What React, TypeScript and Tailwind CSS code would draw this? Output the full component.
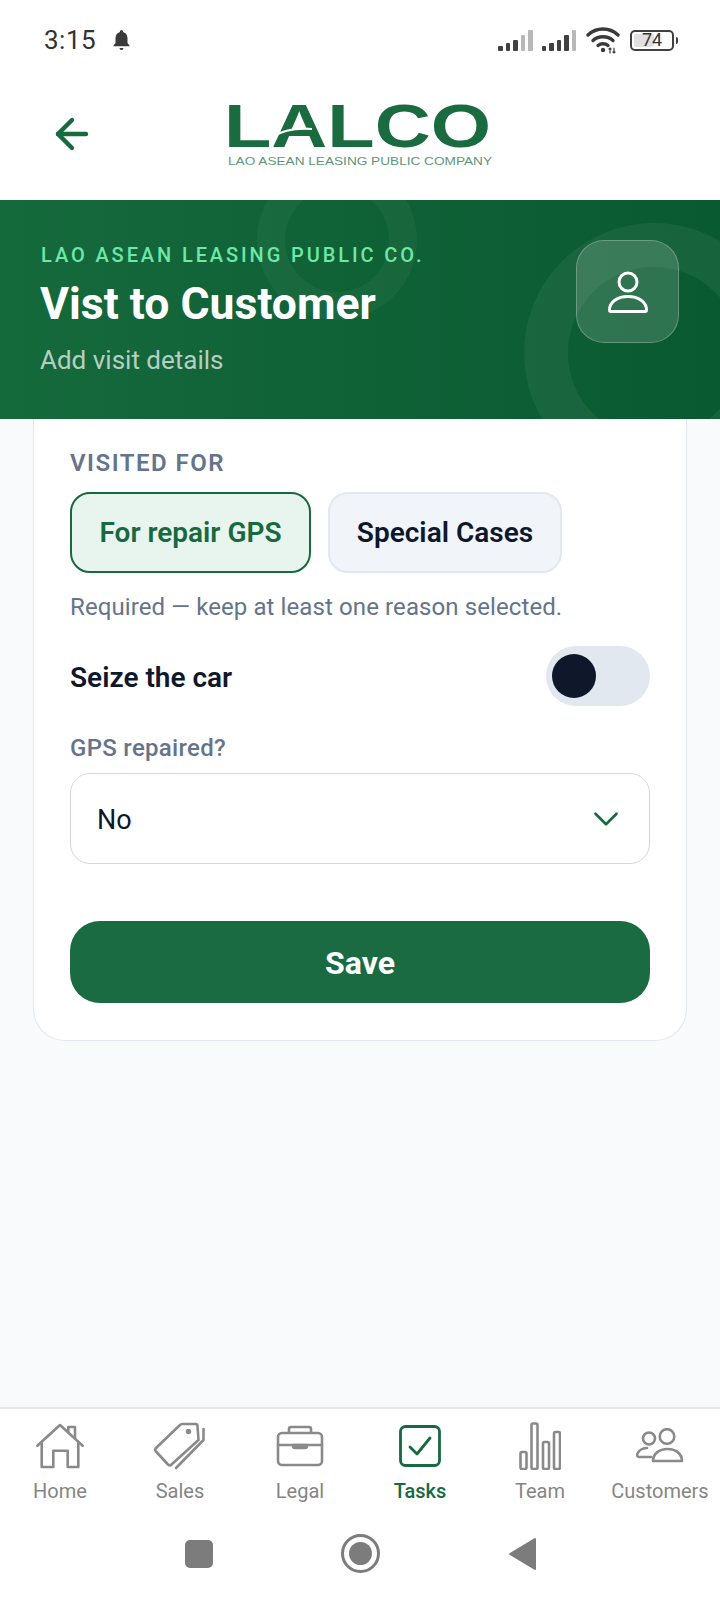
import { ArrowLeft, ChevronDown } from "lucide-react";

const GRAY = "#8a8a8a";

function Signal({ dim }: { dim: number }) {
  const bars = [5, 8, 11, 16, 21];
  return (
    <div className="flex items-end gap-[3px]">
      {bars.map((h, i) => (
        <div
          key={i}
          className={i >= 5 - dim ? "w-[4.500px] rounded-[1px] bg-[#b8b8b8]" : "w-[4.500px] rounded-[1px] bg-[#404040]"}
          style={{ height: h }}
        />
      ))}
    </div>
  );
}

function StatusBar() {
  return (
    <div className="flex h-[78px] items-center justify-between pl-[44px] pr-[42px] pt-[2px]">
      <div className="flex items-center gap-[15px]">
        <span className="text-[26px] leading-none tracking-[0.5px] text-[#333333]">3:15</span>
        <svg width="21" height="22" viewBox="0 0 20 22" fill="#3a3a3a">
          <path d="M10 1a1.600 1.600 0 0 1 1.600 1.600v.5c3 .8 4.400 3.300 4.400 6.400v4.500l2 2.500v.8H2v-.8l2-2.500V9.500c0-3.100 1.400-5.600 4.400-6.400v-.5A1.600 1.600 0 0 1 10 1zM8 19h4a2 2 0 0 1-4 0z" />
        </svg>
      </div>
      <div className="flex items-center">
        <Signal dim={2} />
        <div className="ml-[9px]">
          <Signal dim={1} />
        </div>
        <svg width="34" height="28" viewBox="0 0 34 28" fill="none" stroke="#3a3a3a" strokeWidth="3.400" strokeLinecap="round" className="ml-[10px]">
          <path d="M2 9c8.500-8 21.500-8 30 0" />
          <path d="M7 14.500c5.600-5 14.400-5 20 0" />
          <path d="M12 19.500c2.800-2.400 7.200-2.400 10 0" />
          <circle cx="17" cy="24" r="2.200" fill="#3a3a3a" stroke="none" />
          <path d="M24 27v-5M23 23l1-1 1 1M28 22v5M27 26l1 1 1-1" strokeWidth="1.200" />
        </svg>
        <div className="ml-[10px] flex items-center gap-[2px]">
          <div className="relative flex h-[21px] w-[44px] items-center justify-center rounded-[5px] border-2 border-[#404040] text-[18px] leading-none text-[#333333]">
            <div className="absolute inset-y-[2px] left-[2px] w-[20px] rounded-[2px] bg-[#e0e0e0]" />
            <span className="relative">74</span>
          </div>
          <div className="h-[7px] w-[2px] rounded-r-[2px] bg-[#404040]" />
        </div>
      </div>
    </div>
  );
}

function Logo() {
  return (
    <svg width="270" height="88" viewBox="-4 -4 270 88" className="ml-[128px] shrink-0">
      <text x="-4" y="53" fill="#1a6b40" fontFamily="Liberation Sans" fontWeight="700" fontSize="62" textLength="267" lengthAdjust="spacingAndGlyphs">
        LALCO
      </text>
      <path d="M44 43Q60 33 84 35" fill="none" stroke="white" strokeWidth="2.200" />
      <text x="0" y="71" fill="#5f9679" fontFamily="Liberation Sans" fontSize="10.500" textLength="264" lengthAdjust="spacingAndGlyphs">
        LAO ASEAN LEASING PUBLIC COMPANY
      </text>
    </svg>
  );
}

function Banner() {
  return (
    <div className="relative h-[219px] overflow-hidden bg-gradient-to-r from-[#156a3c] via-[#0f6136] to-[#0a5a31] px-[40px] pt-[42px]">
      <div className="absolute left-[257px] top-[-40px] h-[160px] w-[160px] rounded-full border-[28px] border-white/[0.04]" />
      <div className="absolute left-[524px] top-[23px] h-[260px] w-[260px] rounded-full border-[44px] border-white/[0.055]" />
      <div className="relative flex items-start justify-between">
        <div>
          <p className="ml-[1px] pt-[1px] text-[20px] font-medium leading-[25px] tracking-[2.900px] text-[#6ee7a8]">LAO ASEAN LEASING PUBLIC CO.</p>
          <h1 className="mt-[10px] text-[44.500px] font-bold leading-[52px] text-white">Vist to Customer</h1>
          <p className="mt-[15px] text-[26px] leading-[30px] text-white/70">Add visit details</p>
        </div>
        <div className="-mt-[2px] mr-[1px] flex h-[103px] w-[103px] items-center justify-center rounded-[28px] border border-white/25 bg-white/15">
          <svg width="44" height="44" viewBox="0 0 44 44" fill="none" stroke="white" strokeWidth="3" strokeLinejoin="round">
            <circle cx="22" cy="12" r="9" />
            <path d="M3.500 40c0-8 8-13.500 18.500-13.500S40.500 32 40.500 40c0 1-.5 1.500-1.500 1.500H5c-1 0-1.500-.5-1.500-1.500z" />
          </svg>
        </div>
      </div>
    </div>
  );
}

function VisitCard() {
  return (
    <div className="mx-[33px] h-[622px] rounded-b-[32px] border border-t-0 border-[#e2e8f0] bg-white px-[36px] pt-[30px]">
      <p className="text-[24px] font-semibold leading-[28px] tracking-[1.500px] text-[#64748b]">VISITED FOR</p>
      <div className="mt-[15px] flex gap-[17px]">
        <div className="flex h-[81px] w-[241px] items-center justify-center rounded-[20px] border-2 border-[#17693f] bg-[#e8f5ee] pt-[1px] text-[28px] font-semibold text-[#17693f]">
          For repair GPS
        </div>
        <div className="flex h-[81px] w-[234px] items-center justify-center rounded-[20px] border-2 border-[#e2e8f0] bg-[#f1f5f9] pt-[1px] text-[28px] font-semibold text-[#0f172a]">
          Special Cases
        </div>
      </div>
      <p className="mt-[20px] text-[24px] leading-[28px] tracking-[0.1px] text-[#64748b]">Required — keep at least one reason selected.</p>
      <div className="mt-[25px] flex h-[60px] items-center justify-between">
        <span className="pt-[3px] text-[28px] font-semibold text-[#0f172a]">Seize the car</span>
        <div className="flex h-[60px] w-[104px] items-center rounded-full bg-[#e2e8f0] pl-[6px]">
          <div className="h-[44px] w-[44px] rounded-full bg-[#0f172a]" />
        </div>
      </div>
      <p className="mt-[28px] text-[24px] font-medium leading-[28px] tracking-[0.3px] text-[#64748b]">GPS repaired?</p>
      <div className="mt-[11px] flex h-[91px] items-center justify-between rounded-[20px] border border-[#d4d8de] bg-white pl-[26px] pr-[22px]">
        <span className="pt-[4px] text-[27px] text-[#0f172a]">No</span>
        <ChevronDown size={42} strokeWidth={1.500} color="#17693f" />
      </div>
      <div className="mt-[57px] flex h-[82px] items-center justify-center rounded-[30px] bg-[#1a6b42] pt-[2px] text-[32px] font-bold text-white">
        Save
      </div>
    </div>
  );
}

function HomeIcon() {
  return (
    <svg width="50" height="46" viewBox="0 0 50 46" fill="none" stroke={GRAY} strokeWidth="2.600" strokeLinejoin="round" strokeLinecap="round">
      <path d="M2.300 22.700 25 2l22.700 20.700" />
      <path d="M33.300 9V4H40v11" />
      <path d="M6.700 19v25h11.600V27.700h14.400V44h10.600V19" />
    </svg>
  );
}

function TagIcon() {
  return (
    <svg width="52" height="48" viewBox="0 0 52 48" fill="none" stroke={GRAY} strokeWidth="2.600" strokeLinejoin="round" strokeLinecap="round">
      <path d="M2 26 26 3a3 3 0 0 1 2-1h13.500a2 2 0 0 1 2 2l1 14-27 24.500a2.500 2.500 0 0 1-3.500 0L2 29.500a2.500 2.500 0 0 1 0-3.500z" />
      <circle cx="34.500" cy="9.500" r="2.700" fill={GRAY} stroke="none" />
      <path d="M49.500 7v11L22 46" />
    </svg>
  );
}

function CaseIcon() {
  return (
    <svg width="48" height="42" viewBox="0 0 48 42" fill="none" stroke={GRAY} strokeWidth="2.600" strokeLinejoin="round">
      <rect x="2" y="8" width="44" height="32" rx="4" />
      <path d="M13 8V4a2 2 0 0 1 2-2h18a2 2 0 0 1 2 2v4" />
      <path d="M2 20h44" />
      <path d="M17 20h14v1a2 2 0 0 1-2 2H19a2 2 0 0 1-2-2z" fill={GRAY} />
    </svg>
  );
}

function CheckIcon() {
  return (
    <svg width="42" height="42" viewBox="0 0 42 42" fill="none" stroke="#17693f" strokeWidth="2.800" strokeLinejoin="round" strokeLinecap="round">
      <rect x="1.500" y="1.500" width="39" height="39" rx="5" />
      <path d="M11 22l7 7 13-16" />
    </svg>
  );
}

function BarsIcon() {
  return (
    <svg width="42" height="48" viewBox="0 0 42 48" fill="none" stroke={GRAY} strokeWidth="2.600" strokeLinejoin="round">
      <rect x="1.500" y="30" width="6" height="17" rx="1.500" />
      <rect x="12.500" y="1.500" width="6" height="45.500" rx="1.500" />
      <rect x="24" y="20" width="6" height="27" rx="1.500" />
      <rect x="35" y="10" width="6" height="37" rx="1.500" />
    </svg>
  );
}

function PeopleIcon() {
  return (
    <svg width="48" height="36" viewBox="0 0 48 36" fill="none" stroke={GRAY} strokeWidth="2.600" strokeLinejoin="round" strokeLinecap="round">
      <circle cx="13" cy="10.500" r="6" />
      <circle cx="31" cy="8.500" r="7.300" />
      <path d="M11 20c-5 0-9 3-10 7 0 1 1 2 2 2h12" />
      <path d="M17 33c0-7 6-12 14.500-12S46 26 46 33z" />
    </svg>
  );
}

const tabs = [
  { label: "Home", icon: <HomeIcon /> },
  { label: "Sales", icon: <TagIcon /> },
  { label: "Legal", icon: <CaseIcon /> },
  { label: "Tasks", icon: <CheckIcon />, active: true },
  { label: "Team", icon: <BarsIcon /> },
  { label: "Customers", icon: <PeopleIcon /> },
];

function TabBar() {
  return (
    <div className="grid h-[108px] grid-cols-6 border-t-2 border-[#e5e7eb] bg-white">
      {tabs.map((t) => (
        <div key={t.label} className="flex flex-col items-center">
          <div className="flex h-[70px] items-center justify-center pt-[3px]">{t.icon}</div>
          <span className={t.active ? "text-[20px] font-medium leading-[24px] text-[#17693f]" : "text-[20px] leading-[24px] text-[#858585]"}>
            {t.label}
          </span>
        </div>
      ))}
    </div>
  );
}

function NavBar() {
  return (
    <div className="flex h-[85px] items-center justify-center gap-[128px] bg-white pb-[8px]">
      <div className="h-[28px] w-[28px] rounded-[5px] bg-[#7c7c7c]" />
      <div className="flex h-[39px] w-[39px] items-center justify-center rounded-full border-[3px] border-[#7c7c7c]">
        <div className="h-[23px] w-[23px] rounded-full bg-[#7c7c7c]" />
      </div>
      <svg width="28" height="34" viewBox="0 0 28 34" fill="#7c7c7c" stroke="#7c7c7c" strokeWidth="2" strokeLinejoin="round">
        <path d="M27 2v30L2 17z" />
      </svg>
    </div>
  );
}

export default function App() {
  return (
    <div className="flex h-[1600px] w-[720px] flex-col overflow-hidden bg-[#f8fafc] font-['Roboto',sans-serif]">
      <div className="h-[200px] bg-white">
        <StatusBar />
        <div className="flex h-[110px] items-center pl-[48px] pt-[2px]">
          <ArrowLeft size={48} strokeWidth={2.200} color="#17693f" />
          <Logo />
        </div>
      </div>
      <Banner />
      <div className="flex-1">
        <VisitCard />
      </div>
      <TabBar />
      <NavBar />
    </div>
  );
}
